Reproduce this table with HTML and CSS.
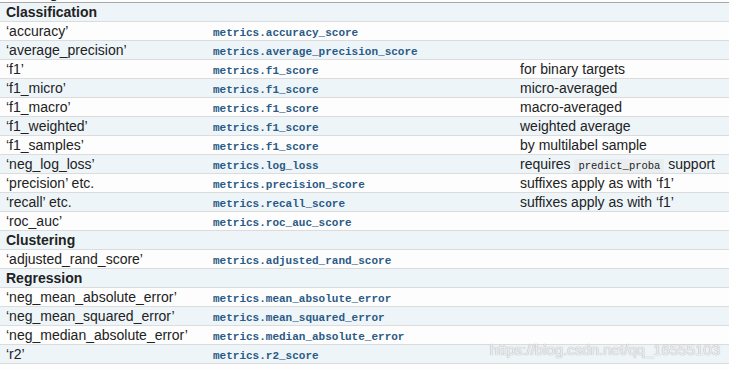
FILE: index.html
```html
<!DOCTYPE html>
<html lang="en">
<head>
  <meta charset="UTF-8" />
  <title>Scoring parameter</title>
  <link rel="stylesheet" href="styles.css">
</head>
<body>
  <div class="wrap">
    <table class="scoring">
      <thead>
        <tr><th>Scoring</th><th>Function</th><th>Comment</th></tr>
      </thead>
      <tbody>
        <tr class="group"><td colspan="3">Classification</td></tr>
        <tr><td>‘accuracy’</td><td><code class="fn">metrics.accuracy_score</code></td><td></td></tr>
        <tr><td>‘average_precision’</td><td><code class="fn">metrics.average_precision_score</code></td><td></td></tr>
        <tr><td>‘f1’</td><td><code class="fn">metrics.f1_score</code></td><td>for binary targets</td></tr>
        <tr><td>‘f1_micro’</td><td><code class="fn">metrics.f1_score</code></td><td>micro-averaged</td></tr>
        <tr><td>‘f1_macro’</td><td><code class="fn">metrics.f1_score</code></td><td>macro-averaged</td></tr>
        <tr><td>‘f1_weighted’</td><td><code class="fn">metrics.f1_score</code></td><td>weighted average</td></tr>
        <tr><td>‘f1_samples’</td><td><code class="fn">metrics.f1_score</code></td><td>by multilabel sample</td></tr>
        <tr><td>‘neg_log_loss’</td><td><code class="fn">metrics.log_loss</code></td><td>requires <code class="lit">predict_proba</code> support</td></tr>
        <tr><td>‘precision’ etc.</td><td><code class="fn">metrics.precision_score</code></td><td>suffixes apply as with ‘f1’</td></tr>
        <tr><td>‘recall’ etc.</td><td><code class="fn">metrics.recall_score</code></td><td>suffixes apply as with ‘f1’</td></tr>
        <tr><td>‘roc_auc’</td><td><code class="fn">metrics.roc_auc_score</code></td><td></td></tr>
        <tr class="group"><td colspan="3">Clustering</td></tr>
        <tr><td>‘adjusted_rand_score’</td><td><code class="fn">metrics.adjusted_rand_score</code></td><td></td></tr>
        <tr class="group"><td colspan="3">Regression</td></tr>
        <tr><td>‘neg_mean_absolute_error’</td><td><code class="fn">metrics.mean_absolute_error</code></td><td></td></tr>
        <tr><td>‘neg_mean_squared_error’</td><td><code class="fn">metrics.mean_squared_error</code></td><td></td></tr>
        <tr><td>‘neg_median_absolute_error’</td><td><code class="fn">metrics.median_absolute_error</code></td><td></td></tr>
        <tr><td>‘r2’</td><td><code class="fn">metrics.r2_score</code></td><td></td></tr>
      </tbody>
    </table>
    <div class="watermark">https://blog.csdn.net/qq_16555103</div>
  </div>
</body>
</html>
```

FILE: styles.css
```css
body {
  margin: 0;
  background: #fdfdfd;
  font-family: "Liberation Sans", Arial, sans-serif;
  font-size: 14px;
  color: #222;
  overflow: hidden;
}

.wrap {
  position: relative;
  height: 369px;
  overflow: hidden;
}

.scoring {
  width: 100%;
  border-collapse: collapse;
  margin-top: -16px;
  table-layout: fixed;
}

.scoring th,
.scoring td {
  height: 18px;
  padding: 0 6px;
  text-align: left;
  white-space: nowrap;
  border-bottom: 1px solid #dcdcdc;
  line-height: 18px;
}

.scoring th {
  font-weight: 700;
  border-bottom: 1px solid #a8a8a8;
}

.scoring th:nth-child(1) { width: 195px; }
.scoring th:nth-child(2) { width: 295px; }

.scoring tbody tr:nth-child(odd) {
  background: #eef5f9;
}

.scoring tbody tr:nth-child(even) {
  background: #fdfdfd;
}

.group td {
  font-weight: 700;
}

.fn {
  font-family: "Liberation Mono", "Courier New", monospace;
  font-size: 11px;
  line-height: 11px;
  font-weight: 700;
  color: #2a5a86;
}

.lit {
  font-family: "Liberation Mono", "Courier New", monospace;
  font-size: 10.5px;
  line-height: 11px;
  color: #222;
  background: #eaeef1;
  padding: 1px 4px;
  border-radius: 2px;
}

/* csdn watermark */
.watermark {
  position: absolute;
  right: 9px;
  bottom: 10px;
  font-size: 15px;
  line-height: 18px;
  color: rgba(255, 255, 255, 0.8);
  text-shadow: 0 0 1px #b0b0b0, 0 0 1px #b0b0b0;
}
```
